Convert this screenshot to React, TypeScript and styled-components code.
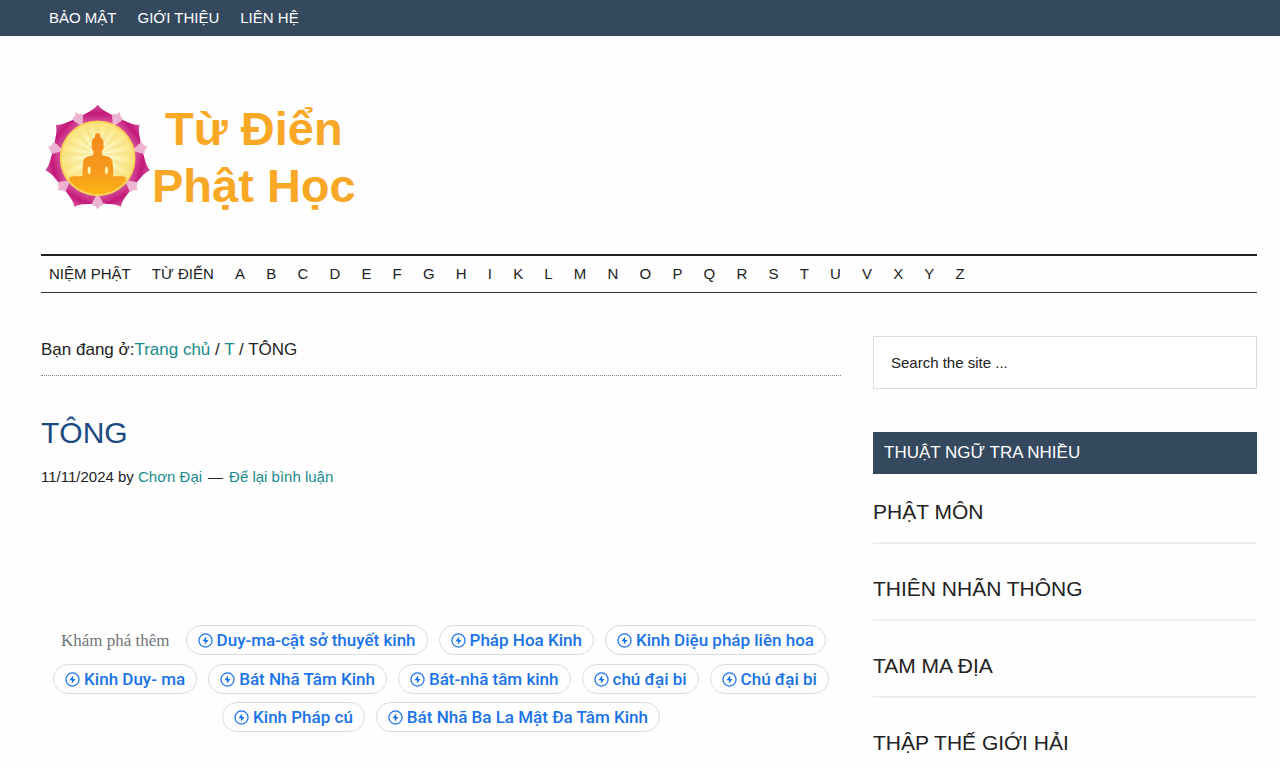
import React from "react";
import styled, { createGlobalStyle } from "styled-components";

const teal = "#188a8a";
const slate = "#34495e";
const ink = "#222222";

const GlobalStyle = createGlobalStyle`
  *, *::before, *::after { box-sizing: border-box; }
  body {
    margin: 0;
    background: #fefefe;
    color: ${ink};
    font-family: "Liberation Sans", Arial, sans-serif;
    font-size: 17px;
    overflow-x: hidden;
  }
  ul { list-style: none; margin: 0; padding: 0; }
  a { text-decoration: none; color: inherit; }
`;

const TopBar = styled.nav`
  background: ${slate};
  color: #fff;
  padding: 0 23px 0 41px;
`;

const MenuList = styled.ul<{ $spread?: boolean }>`
  display: flex;
  flex-wrap: wrap;
  align-items: center;
  justify-content: ${(p) => (p.$spread ? "space-between" : "flex-start")};
  max-width: ${(p) => (p.$spread ? "932px" : "none")};
  gap: 0 21px;
  padding: 0 8px;
  min-height: 36px;
  font-size: 15px;
  line-height: 20px;
`;

const Page = styled.div`
  padding: 0 23px 0 41px;
`;

const Header = styled.header`
  padding: 60px 0 37px;
`;

const Brand = styled.a`
  display: inline-flex;
  align-items: center;
  height: 121px;
  padding-left: 3px;
  gap: 2px;
`;

const BrandText = styled.span`
  color: #f9a826;
  font-size: 47px;
  line-height: 57px;
  font-weight: bold;
  text-align: center;
`;

const MainMenu = styled.nav`
  border-top: 2px solid #231f20;
  border-bottom: 1px solid #333;
`;

const Columns = styled.div`
  display: grid;
  grid-template-columns: minmax(0, 25fr) minmax(0, 12fr);
  column-gap: 32px;
  padding-top: 43px;
`;

const Breadcrumb = styled.div`
  border-bottom: 1px dotted #888;
  line-height: 27px;
  padding-bottom: 12px;
  margin-bottom: 39px;
`;

const TextLink = styled.a`
  color: ${teal};
`;

const Title = styled.h1`
  margin: 0 0 14px;
  color: #1a4b80;
  font-size: 30px;
  line-height: 36px;
  font-weight: 400;
`;

const Meta = styled.p`
  margin: 0;
  font-size: 15px;
  line-height: 24px;
`;

const Dash = styled.span`
  padding: 0 6px;
`;

const Explore = styled.section`
  display: flex;
  flex-wrap: wrap;
  justify-content: center;
  align-items: flex-start;
  gap: 8px 11px;
  margin-top: 136px;
`;

const ExploreLabel = styled.span`
  padding: 0 5px;
  color: #70757a;
  font-family: "Liberation Serif", "Times New Roman", serif;
  font-size: 17px;
  line-height: 31px;
`;

const Chip = styled.a`
  display: inline-flex;
  align-items: center;
  gap: 4px;
  height: 30px;
  padding: 0 11px;
  border: 1px solid #dadce0;
  border-radius: 15px;
  color: #1a73e8;
  font-family: Roboto, sans-serif;
  font-size: 17px;
  font-weight: 500;
  white-space: nowrap;
`;

const SearchBox = styled.input`
  display: block;
  width: 100%;
  height: 53px;
  padding: 0 17px;
  border: 1px solid #ddd;
  background: #fff;
  color: ${ink};
  font-family: inherit;
  font-size: 15px;
  &::placeholder { color: ${ink}; opacity: 1; }
`;

const WidgetTitle = styled.h2`
  margin: 43px 0 21px;
  padding: 0 11px;
  background: ${slate};
  color: #fff;
  font-size: 17px;
  line-height: 42px;
  font-weight: 400;
`;

const TermItem = styled.li`
  border-bottom: 2px solid #eee;
  padding-bottom: 13px;
  margin-bottom: 28px;
  font-size: 21px;
  line-height: 34px;
`;

const steps = [0, 1, 2, 3, 4, 5, 6];
const rays = Array.from({ length: 16 }, (_, i) => i * 22.5);

const Lotus = () => (
  <svg width="106" height="106" viewBox="42 44 318 318" aria-hidden="true">
    <defs>
      <linearGradient id="petal" gradientUnits="userSpaceOnUse" x1="203" y1="50" x2="203" y2="112">
        <stop offset="0" stopColor="#d04a93" />
        <stop offset="0.35" stopColor="#c4187a" />
        <stop offset="1" stopColor="#dc6ba9" />
      </linearGradient>
      <radialGradient id="sun">
        <stop offset="0" stopColor="#fffde0" />
        <stop offset="0.6" stopColor="#fdf3ae" />
        <stop offset="1" stopColor="#fce27a" />
      </radialGradient>
      <linearGradient id="gold" x1="0" y1="0" x2="0" y2="1">
        <stop offset="0" stopColor="#f3891c" />
        <stop offset="0.6" stopColor="#f79a1d" />
        <stop offset="1" stopColor="#fdb913" />
      </linearGradient>
      <clipPath id="disc">
        <circle cx="203" cy="207" r="108" />
      </clipPath>
    </defs>
    {steps.map((i) => (
      <path
        key={`petal${i}`}
        transform={`rotate(${(i * 360) / 7} 203 207)`}
        d="M152 114 L150 84 C164 70 188 67 203 46 C218 67 242 70 256 84 L254 114Z"
        fill="url(#petal)"
      />
    ))}
    {steps.map((i) => (
      <path
        key={`sepal${i}`}
        transform={`rotate(${(i * 360) / 7 + 180 / 7} 203 207)`}
        d="M203 104 L193 84 C188 78 187 72 186 66 C194 66 199 62 203 53 C207 62 212 66 220 66 C219 72 218 78 213 84Z"
        fill="#edb3d2"
      />
    ))}
    <circle cx="203" cy="207" r="111" fill="url(#sun)" stroke="#f9d257" strokeWidth="5" />
    <g clipPath="url(#disc)">
      {rays.map((angle) => (
        <path
          key={angle}
          transform={`rotate(${angle} 203 195)`}
          d="M203 195 L191 70 L215 70Z"
          fill="#f5e07e"
          opacity="0.5"
        />
      ))}
      <path
        fill="url(#gold)"
        fillRule="evenodd"
        d="M203 132 C209 132 212 137 211 144 C219 148 222 158 220 167 C223 172 220 181 216 184 C214 192 216 197 221 199 C238 201 247 206 248 222 L250 260 C262 262 277 259 287 264 L287 325 L118 325 L118 264 C130 259 146 262 157 260 L159 222 C160 206 169 201 185 199 C190 197 192 192 190 184 C186 181 183 172 186 167 C184 158 187 148 195 144 C194 137 197 132 203 132Z M178 231 C171 236 171 251 178 256 C184 251 184 236 178 231Z M229 231 C223 236 223 251 229 256 C236 251 236 236 229 231Z"
      />
    </g>
  </svg>
);

const BoltIcon = () => (
  <svg width="15" height="15" viewBox="0 0 24 24" aria-hidden="true">
    <circle cx="12" cy="12" r="10.5" fill="none" stroke="currentColor" strokeWidth="2" />
    <path d="M13 5.5 L7 13 H11 V18.5 L17 11 H13Z" fill="currentColor" />
  </svg>
);

const topLinks = ["BẢO MẬT", "GIỚI THIỆU", "LIÊN HỆ"];
const menuLinks = ["NIỆM PHẬT", "TỪ ĐIỂN", ..."ABCDEFGHIKLMNOPQRSTUVXYZ"];
const chips = [
  "Duy-ma-cật sở thuyết kinh",
  "Pháp Hoa Kinh",
  "Kinh Diệu pháp liên hoa",
  "Kinh Duy- ma",
  "Bát Nhã Tâm Kinh",
  "Bát-nhã tâm kinh",
  "chú đại bi",
  "Chú đại bi",
  "Kinh Pháp cú",
  "Bát Nhã Ba La Mật Đa Tâm Kinh",
];
const terms = ["PHẬT MÔN", "THIÊN NHÃN THÔNG", "TAM MA ĐỊA", "THẬP THẾ GIỚI HẢI"];

const Menu = ({ items, spread }: { items: string[]; spread?: boolean }) => (
  <MenuList $spread={spread}>
    {items.map((item) => (
      <li key={item}>
        <a href="#">{item}</a>
      </li>
    ))}
  </MenuList>
);

export default function App() {
  return (
    <>
      <GlobalStyle />
      <TopBar>
        <Menu items={topLinks} />
      </TopBar>
      <Page>
        <Header>
          <Brand href="#">
            <Lotus />
            <BrandText>
              Từ Điển
              <br />
              Phật Học
            </BrandText>
          </Brand>
        </Header>
        <MainMenu>
          <Menu items={menuLinks} spread />
        </MainMenu>
        <Columns>
          <main>
            <Breadcrumb>
              Bạn đang ở:<TextLink href="#">Trang chủ</TextLink> / <TextLink href="#">T</TextLink> / TÔNG
            </Breadcrumb>
            <Title>TÔNG</Title>
            <Meta>
              11/11/2024 by <TextLink href="#">Chơn Đại</TextLink>
              <Dash>—</Dash>
              <TextLink href="#">Để lại bình luận</TextLink>
            </Meta>
            <Explore>
              <ExploreLabel>Khám phá thêm</ExploreLabel>
              {chips.map((chip) => (
                <Chip key={chip} href="#">
                  <BoltIcon />
                  {chip}
                </Chip>
              ))}
            </Explore>
          </main>
          <aside>
            <form role="search">
              <SearchBox type="search" aria-label="Search the site" placeholder="Search the site ..." />
            </form>
            <WidgetTitle>THUẬT NGỮ TRA NHIỀU</WidgetTitle>
            <ul>
              {terms.map((term) => (
                <TermItem key={term}>
                  <a href="#">{term}</a>
                </TermItem>
              ))}
            </ul>
          </aside>
        </Columns>
      </Page>
    </>
  );
}
